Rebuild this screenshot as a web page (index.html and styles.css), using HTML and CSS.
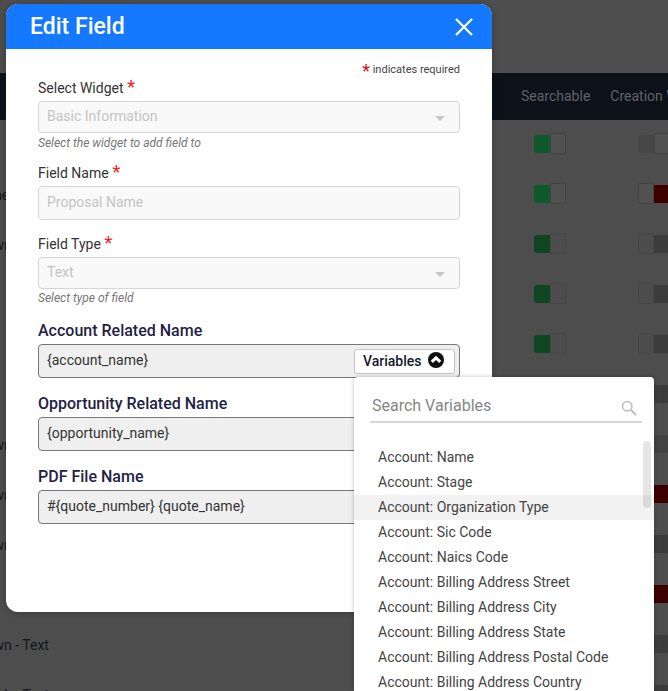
FILE: index.html
```html
<!DOCTYPE html>
<html lang="en">
<head>
<meta charset="utf-8">
<title>Edit Field</title>
<link rel="stylesheet" href="styles.css">
</head>
<body>
<main class="page">
  <div class="table-head"><span>Searchable</span><span class="nowrap">Creation Wizard</span></div>
  <div class="table-body">
    <div class="row"><span class="cell-name"></span><span class="tg on"><i class="fill"></i><i class="knob"></i></span><span class="tg"><i class="fill grey"></i><i class="knob"></i></span></div>
    <div class="row"><span class="cell-name">Multi-Line - Text</span><span class="tg on"><i class="fill"></i><i class="knob"></i></span><span class="tg"><i class="knob"></i><i class="fill red"></i></span></div>
    <div class="row dim"><span class="cell-name">Dropdown - Text</span><span class="tg on"><i class="fill"></i><i class="knob"></i></span><span class="tg"><i class="knob"></i><i class="fill"></i></span></div>
    <div class="row dim"><span class="cell-name"></span><span class="tg on"><i class="fill"></i><i class="knob"></i></span><span class="tg"><i class="knob"></i><i class="fill"></i></span></div>
    <div class="row dim"><span class="cell-name"></span><span class="tg on"><i class="fill"></i><i class="knob"></i></span><span class="tg"><i class="knob"></i><i class="fill"></i></span></div>
    <div class="row dim"><span class="cell-name"></span><span class="tg"></span><span class="tg"><i class="knob"></i><i class="fill"></i></span></div>
    <div class="row dim"><span class="cell-name">Dropdown - Text</span><span class="tg"></span><span class="tg"><i class="knob"></i><i class="fill soft"></i></span></div>
    <div class="row"><span class="cell-name">Dropdown - Text</span><span class="tg"></span><span class="tg"><i class="knob"></i><i class="fill red"></i></span></div>
    <div class="row dim"><span class="cell-name">Dropdown - Text</span><span class="tg"></span><span class="tg"><i class="knob"></i><i class="fill"></i></span></div>
    <div class="row"><span class="cell-name"></span><span class="tg"></span><span class="tg"><i class="knob"></i><i class="fill red"></i></span></div>
    <div class="row dim"><span class="cell-name">Dropdown - Text</span><span class="tg"></span><span class="tg"><i class="knob"></i><i class="fill"></i></span></div>
    <div class="row dim"><span class="cell-name">Paragraph - Text</span><span class="tg"></span><span class="tg"><i class="knob"></i><i class="fill"></i></span></div>
  </div>
</main>

<section class="modal">
  <header class="modal-head">
    <h1>Edit Field</h1>
    <svg class="close" width="18" height="18" viewBox="0 0 18 18"><path d="M1 1 17 17M17 1 1 17" stroke="#fff" stroke-width="2.2" fill="none"/></svg>
  </header>
  <div class="modal-body">
    <p class="req-note"><span class="star-small">*</span> indicates required</p>

    <label class="lbl lbl-widget">Select Widget <span class="star">*</span></label>
    <div class="ctl ctl-select"><span>Basic Information</span><i class="caret"></i></div>
    <p class="hint">Select the widget to add field to</p>

    <label class="lbl lbl-name">Field Name <span class="star">*</span></label>
    <div class="ctl ctl-input"><span>Proposal Name</span></div>

    <label class="lbl lbl-type">Field Type <span class="star">*</span></label>
    <div class="ctl ctl-select"><span>Text</span><i class="caret"></i></div>
    <p class="hint hint-tight">Select type of field</p>

    <h2 class="head-lbl head-first">Account Related Name</h2>
    <div class="tpl">
      <span class="tpl-text">{account_name}</span>
      <button class="var-btn" type="button">Variables
        <svg width="16" height="16" viewBox="0 0 16 16"><circle cx="8" cy="8" r="8" fill="#111"/><path d="M3.8 9.8 8 5.8l4.2 4" stroke="#fff" stroke-width="3" fill="none"/></svg>
      </button>
    </div>

    <h2 class="head-lbl">Opportunity Related Name</h2>
    <div class="tpl"><span class="tpl-text">{opportunity_name}</span></div>

    <h2 class="head-lbl">PDF File Name</h2>
    <div class="tpl"><span class="tpl-text">#{quote_number} {quote_name}</span></div>
  </div>
</section>

<aside class="vars">
  <div class="vars-search">
    <span>Search Variables</span>
    <svg class="search-icon" width="16" height="16" viewBox="0 0 16 16"><circle cx="6.2" cy="6.2" r="4.7" stroke="#bdbdbd" stroke-width="1.6" fill="none"/><path d="M9.8 9.8 15 15" stroke="#bdbdbd" stroke-width="2" fill="none"/></svg>
  </div>
  <ul class="vars-list">
    <li>Account: Name</li>
    <li>Account: Stage</li>
    <li class="active">Account: Organization Type</li>
    <li>Account: Sic Code</li>
    <li>Account: Naics Code</li>
    <li>Account: Billing Address Street</li>
    <li>Account: Billing Address City</li>
    <li>Account: Billing Address State</li>
    <li>Account: Billing Address Postal Code</li>
    <li>Account: Billing Address Country</li>
  </ul>
  <div class="scroll-thumb"></div>
</aside>
</body>
</html>
```
FILE: styles.css
```css
* { box-sizing: border-box; }
html, body { margin: 0; height: 100%; }
body {
  background: #4d4d4d;
  font-family: Roboto, "Liberation Sans", sans-serif;
  overflow: hidden;
  position: relative;
}
.page { padding-top: 73px; margin-left: -52px; width: 800px; }
.table-head {
  height: 47px;
  background: #0d1119;
  color: #5f636a;
  font-size: 14px;
  display: flex;
  align-items: center;
  padding: 0 0 1px 573px;
  gap: 20px;
}
.nowrap { white-space: nowrap; }
.row {
  height: 50px;
  display: grid;
  grid-template-columns: 586px 104px 1fr;
  align-items: start;
  padding-top: 13px;
}
.cell-name { color: #15171c; font-size: 14px; line-height: 16px; padding-top: 4px; white-space: nowrap; }
.tg { display: flex; height: 21px; align-items: center; }
.tg i { display: block; }
.fill { width: 16px; height: 18px; background: #3c3c3c; }
.soft { background: #444; }
.grey { background: #474747; border-radius: 3px 0 0 3px; }
.red { background: #3d0000; }
.knob { width: 16px; height: 21px; background: #515151; border: 1px solid #434343; border-radius: 2px; }
.on .fill { background: #0e5a2b; border-radius: 3px 0 0 3px; }
.dim .on .fill { background: #0f4722; }
.dim .knob { background: #4c4c4c; border-color: #464646; }

.modal {
  position: absolute;
  left: 6px; top: 4px;
  width: 486px; height: 608px;
  background: #fff;
  border-radius: 12px;
  overflow: hidden;
  box-shadow: 0 1px 6px rgba(0,0,0,.25);
}
.modal-head {
  height: 45px;
  background: #1479ff;
  display: flex;
  align-items: center;
  justify-content: space-between;
  padding: 0 19px 0 24px;
}
.modal-head h1 { margin: 0; color: #fff; font-size: 23px; font-weight: 500; }
.modal-body { padding: 0 32px; }
.req-note { margin: 0; padding-top: 14px; height: 28px; text-align: right; font-size: 11px; line-height: 14px; color: #444; }
.star-small { color: #d0101c; font-size: 18px; line-height: 0; position: relative; top: 4px; }
.lbl { display: block; font-size: 14px; line-height: 16px; color: #333; }
.lbl-widget { margin-top: 3px; margin-bottom: 5px; }
.lbl-name { margin-top: 15px; margin-bottom: 5px; }
.lbl-type { margin-top: 16px; margin-bottom: 5px; }
.star { color: #f3212e; font-size: 19px; line-height: 0; position: relative; }
.ctl {
  display: flex;
  align-items: center;
  justify-content: space-between;
  border: 1px solid #d6d6d6;
  border-radius: 4px;
  background: #f9f9f9;
  color: #c4c4c4;
  font-size: 14px;
  padding: 0 14px 2px 8px;
}
.ctl-select { height: 32px; }
.ctl-input { height: 34px; }
.caret { width: 0; height: 0; border-left: 5px solid transparent; border-right: 5px solid transparent; border-top: 5px solid #c6c6c6; margin-top: 4px; }
.hint { margin: 3px 0 0; font-size: 12px; line-height: 14px; font-style: italic; color: #777; }
.hint-tight { margin-top: 2px; }
.head-lbl { margin: 16px 0 4px; font-size: 16px; line-height: 19px; font-weight: 500; color: #1f2244; }
.tpl {
  height: 34px;
  display: flex;
  align-items: center;
  justify-content: space-between;
  background: #efefef;
  border: 1px solid #777;
  border-radius: 4px;
  color: #333;
  font-size: 14px;
  padding: 0 4px 0 8px;
}
.tpl-text { margin-bottom: 3px; }
.var-btn {
  height: 25px;
  width: 101px;
  display: flex;
  align-items: center;
  gap: 7px;
  padding: 0 0 0 8px;
  background: #fff;
  border: 1px solid #c4c4c4;
  border-radius: 3px;
  font: 500 14px Roboto, "Liberation Sans", sans-serif;
  color: #15192e;
}
.var-btn svg { margin-top: -2px; }

.vars {
  position: absolute;
  left: 354px; top: 377px;
  width: 300px; height: 314px;
  background: #fff;
  border-radius: 4px 4px 0 0;
  overflow: hidden;
  box-shadow: 0 0 4px rgba(0,0,0,.25);
}
.vars-search {
  margin: 16px 12px 0 16px;
  height: 30px;
  display: flex;
  align-items: center;
  justify-content: space-between;
  padding: 0 5px 4px 2px;
  border-bottom: 2px solid #d6d6d6;
  color: #858585;
  font-size: 16px;
}
.search-icon { margin-top: 5px; }
.vars-list { list-style: none; margin: 22px 0 0; padding: 0; }
.vars-list li { height: 25px; line-height: 25px; padding-left: 24px; font-size: 14px; color: #444; }
.vars-list .active { background: #f2f2f2; }
.scroll-thumb {
  position: absolute;
  left: 289px; top: 64px;
  width: 8px; height: 67px;
  background: rgba(0,0,0,.1);
  border-radius: 4px;
}
```
